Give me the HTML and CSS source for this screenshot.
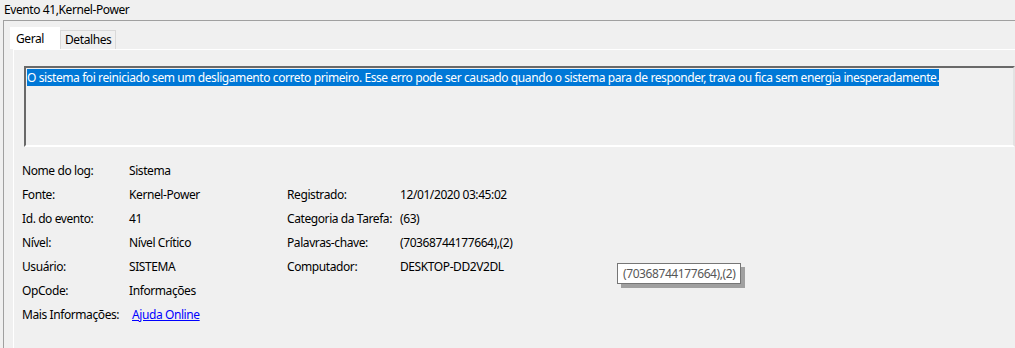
FILE: index.html
```html
<!DOCTYPE html>
<html lang="pt-BR">
<head>
    <meta charset="UTF-8">
    <title>Evento 41,Kernel-Power</title>
    <link rel="stylesheet" href="styles.css">
</head>
<body>

    <div class="title">Evento 41,Kernel-Power</div>

    <div class="frame">
        <div class="tabs">
            <div class="tab active">Geral</div>
            <div class="tab">Detalhes</div>
        </div>

        <div class="panel">
            <div class="textbox">
                <span class="selected">O sistema foi reiniciado sem um desligamento correto primeiro. Esse erro pode ser causado quando o sistema para de responder, trava ou fica sem energia inesperadamente.</span>
            </div>

            <div class="info">
                <div class="label">Nome do log:</div>
                <div class="value">Sistema</div>
                <div class="label"></div>
                <div class="value"></div>

                <div class="label">Fonte:</div>
                <div class="value">Kernel-Power</div>
                <div class="label">Registrado:</div>
                <div class="value">12/01/2020 03:45:02</div>

                <div class="label">Id. do evento:</div>
                <div class="value">41</div>
                <div class="label">Categoria da Tarefa:</div>
                <div class="value">(63)</div>

                <div class="label">Nível:</div>
                <div class="value">Nível Crítico</div>
                <div class="label">Palavras-chave:</div>
                <div class="value">(70368744177664),(2)</div>

                <div class="label">Usuário:</div>
                <div class="value">SISTEMA</div>
                <div class="label">Computador:</div>
                <div class="value">DESKTOP-DD2V2DL</div>

                <div class="label">OpCode:</div>
                <div class="value">Informações</div>
                <div class="label"></div>
                <div class="value"></div>

                <div class="label">Mais Informações:</div>
                <div class="value"><a href="#" class="link">Ajuda Online</a></div>
                <div class="label"></div>
                <div class="value"></div>
            </div>
        </div>
    </div>

    <div class="tooltip">(70368744177664),(2)</div>

</body>
</html>
```

FILE: styles.css
```css
body {
    font-family: "Noto Sans", "Open Sans", sans-serif;
    font-size: 12px;
    letter-spacing: -0.41px;
    color: #000;
    background: #f0f0f0;
    margin: 0;
    padding: 0;
    height: 348px;
    overflow: hidden;
}
.title {
    height: 20px;
    line-height: 20px;
    padding-left: 4px;
}
.frame {
    margin-left: 3px;
    border-top: 1px solid #a0a0a0;
    border-left: 1px solid #a0a0a0;
    height: 330px;
}
.tabs {
    display: flex;
    align-items: flex-end;
    padding-left: 6px;
    padding-top: 6px;
}
.tab {
    height: 18px;
    line-height: 18px;
    padding: 0 4px;
    border: 1px solid #d9d9d9;
    border-bottom: none;
    background: #f0f0f0;
}
.tab.active {
    height: 21px;
    line-height: 21px;
    width: 38px;
    padding: 0 5px;
    background: #fff;
    border-color: #fff;
    position: relative;
    z-index: 1;
}
.panel {
    margin-left: 9px;
    border-top: 1px solid #fff;
    border-left: 1px solid #fff;
    height: 300px;
}
.textbox {
    margin: 16px 0 0 10px;
    width: 985px;
    height: 75px;
    border-top: 2px solid #696969;
    border-left: 2px solid #696969;
    border-right: 2px solid #e3e3e3;
    border-bottom: 2px solid #fff;
    padding: 1px 1px;
}
.selected {
    background: #0078d7;
    color: #fff;
    line-height: 16px;
}
.info {
    display: grid;
    grid-template-columns: 107px 158px 113px auto;
    grid-auto-rows: 24px;
    padding: 12px 0 0 8px;
    line-height: 24px;
    white-space: nowrap;
}
.link {
    color: #0000ff;
    text-decoration: underline;
    margin-left: 3px;
}
.tooltip {
    position: absolute;
    left: 617px;
    top: 263px;
    height: 19px;
    line-height: 19px;
    padding: 0 5px;
    background: #fff;
    border: 1px solid #767676;
    color: #575757;
    box-shadow: 4px 4px 0 #a0a0a0;
}
```
